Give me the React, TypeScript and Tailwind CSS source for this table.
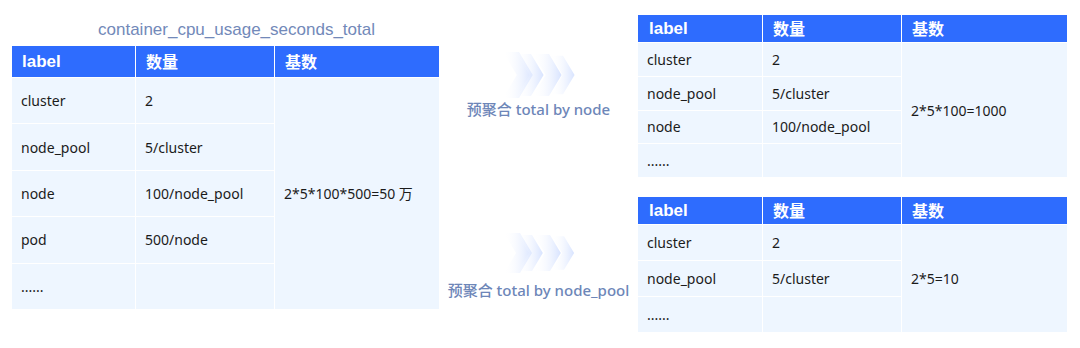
import React from 'react';

type Row = { label: string; count: string };

interface TableProps {
  cols: string;
  rows: string;
  data: Row[];
  total: string;
  headPad: string;
}

const head = 'bg-[#2e6cfe] text-white font-bold flex items-center';

function Table({ cols, rows, data, total, headPad }: TableProps) {
  return (
    <div className={`grid ${cols} ${rows} gap-px bg-white`}>
      <div className={`${head} text-[17px] font-['Liberation_Sans',sans-serif] ${headPad}`}>label</div>
      <div className={`${head} text-[16px] pl-[10px]`}>数量</div>
      <div className={`${head} text-[16px] pl-[10px]`}>基数</div>
      {data.map((r, i) => (
        <React.Fragment key={r.label + i}>
          <div className="bg-[#eef6ff] flex items-center pl-[9px] col-start-1" style={{ gridRowStart: i + 2 }}>
            {r.label}
          </div>
          <div className="bg-[#eef6ff] flex items-center pl-[9px] col-start-2" style={{ gridRowStart: i + 2 }}>
            {r.count}
          </div>
        </React.Fragment>
      ))}
      <div
        className="bg-[#eef6ff] flex items-center pl-[9px] col-start-3 row-start-2"
        style={{ gridRowEnd: data.length + 2 }}
      >
        {total}
      </div>
    </div>
  );
}

function Chevrons({ id, h }: { id: string; h: number }) {
  const m = h / 2;
  const shape = (x: number, w: number, t: number, b: number) => {
    const mid = (t + b) / 2;
    const d = (b - t) * 0.3;
    return `${x},${t} ${x + w},${t} ${x + w + d},${mid} ${x + w},${b} ${x},${b} ${x + d},${mid}`;
  };
  return (
    <svg width="74" height={h} viewBox={`0 0 74 ${h}`} className="block">
      <defs>
        <linearGradient id={id} x1="0" x2="1" y1="0" y2="0">
          <stop offset="0" stopColor="#ffffff" stopOpacity="0" />
          <stop offset="1" stopColor="#d3e0ff" stopOpacity="0.9" />
        </linearGradient>
      </defs>
      <polygon points={shape(0, 16, 0, h)} fill={`url(#${id})`} />
      <polygon points={shape(14, 14, 2, h - 2)} fill={`url(#${id})`} />
      <polygon points={shape(30, 16, 2, h - 2)} fill={`url(#${id})`} />
      <polygon points={shape(48, 12, m - h * 0.42, m + h * 0.42)} fill={`url(#${id})`} />
    </svg>
  );
}

export default function App() {
  return (
    <div className="w-[1080px] h-[348px] bg-white flex text-[#1b1b1b] text-[14px] font-['Noto_Sans','Noto_Sans_CJK_SC',sans-serif]">
      {/* source metric */}
      <div className="ml-[12px] w-[427px] flex flex-col pt-[20px]">
        <div className="h-[20px] leading-[20px] text-center pl-[22px] text-[17px] text-[#7289b9] font-['Liberation_Sans',sans-serif]">
          container_cpu_usage_seconds_total
        </div>
        <div className="mt-[6px]">
          <Table
            cols="grid-cols-[123px_138px_164px]"
            rows="grid-rows-[31px_repeat(5,45.4px)]"
            headPad="pl-[10px]"
            data={[
              { label: 'cluster', count: '2' },
              { label: 'node_pool', count: '5/cluster' },
              { label: 'node', count: '100/node_pool' },
              { label: 'pod', count: '500/node' },
              { label: '......', count: '' },
            ]}
            total="2*5*100*500=50 万"
          />
        </div>
      </div>

      {/* arrows */}
      <div className="w-[199px] flex flex-col items-center text-[#6d86b8] text-[15px] font-medium">
        <div className="mt-[52px] pl-[2px]">
          <Chevrons id="g1" h={46} />
        </div>
        <div className="mt-[1px] h-[20px] leading-[20px]">预聚合 total by node</div>
        <div className="mt-[114px] pl-[4px]">
          <Chevrons id="g2" h={40} />
        </div>
        <div className="mt-[7px] h-[20px] leading-[20px]">预聚合 total by node_pool</div>
      </div>

      {/* aggregated results */}
      <div className="w-[429px] flex flex-col pt-[15px] gap-[20px]">
        <Table
          cols="grid-cols-[124px_138px_165px]"
          rows="grid-rows-[27px_repeat(4,32.75px)]"
          headPad="pl-[11px]"
          data={[
            { label: 'cluster', count: '2' },
            { label: 'node_pool', count: '5/cluster' },
            { label: 'node', count: '100/node_pool' },
            { label: '......', count: '' },
          ]}
          total="2*5*100=1000"
        />
        <Table
          cols="grid-cols-[124px_138px_165px]"
          rows="grid-rows-[27px_repeat(3,35px)]"
          headPad="pl-[11px]"
          data={[
            { label: 'cluster', count: '2' },
            { label: 'node_pool', count: '5/cluster' },
            { label: '......', count: '' },
          ]}
          total="2*5=10"
        />
      </div>
    </div>
  );
}
